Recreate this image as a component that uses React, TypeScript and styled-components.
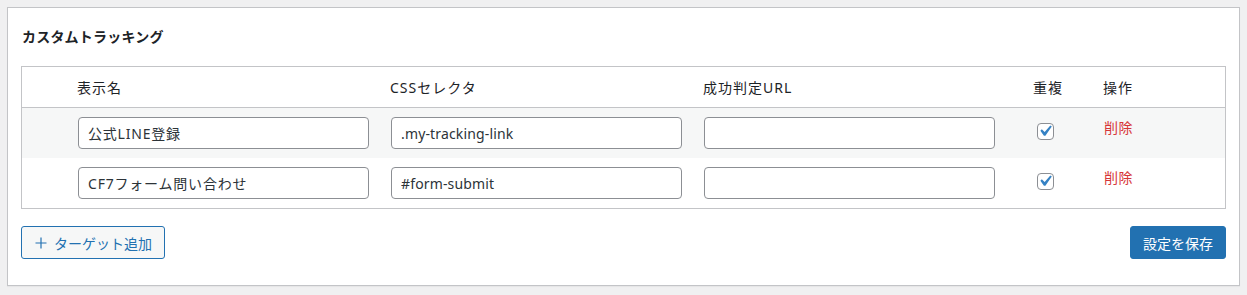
import React from 'react';
import styled, { createGlobalStyle } from 'styled-components';

const GlobalStyle = createGlobalStyle`
  html, body {
    margin: 0;
    padding: 0;
    background: #f0f0f1;
  }
  body {
    font-family: "Noto Sans", "Noto Sans CJK JP", sans-serif;
    color: #1d2327;
  }
  #root {
    padding: 7px;
  }
`;

const Card = styled.div`
  background: #fff;
  border: 1px solid #c3c4c7;
  padding: 19px 13px 26px;
  box-shadow: 0 1px 1px rgba(0, 0, 0, 0.04);
`;

const Title = styled.h2`
  margin: 0 0 19px;
  padding-left: 1px;
  font-size: 14px;
  line-height: 20px;
  font-weight: 700;
  letter-spacing: 0.2px;
  color: #1d2327;
`;

const Table = styled.div`
  border: 1px solid #c3c4c7;
`;

const COLUMNS = '46px 313px 313px 330px 70px 1fr';

const HeadRow = styled.div`
  display: grid;
  grid-template-columns: ${COLUMNS};
  height: 40px;
  align-items: center;
  border-bottom: 1px solid #c3c4c7;
`;

const HeadCell = styled.div`
  padding: 0 10px 0 9px;
  font-size: 14px;
  letter-spacing: 1px;
  color: #1d2327;
`;

const Row = styled.div<{ $alt?: boolean }>`
  display: grid;
  grid-template-columns: ${COLUMNS};
  height: 50px;
  align-items: center;
  background: ${(p) => (p.$alt ? '#f6f7f7' : '#fff')};
`;

const Cell = styled.div<{ $pad?: number }>`
  padding: 0 10px 0 ${(p) => p.$pad ?? 10}px;
  display: flex;
  align-items: center;
`;

const TextInput = styled.input<{ $jp?: boolean }>`
  box-sizing: border-box;
  width: 291px;
  height: 32px;
  padding: 0 10px 0 9px;
  border: 1px solid #8c8f94;
  border-radius: 4px;
  background: #fff;
  font-family: "Noto Sans", "Noto Sans CJK JP", sans-serif;
  font-size: 14px;
  letter-spacing: ${(p) => (p.$jp ? '0.8px' : '0.15px')};
  color: #2c3338;
  outline: none;
`;

const CheckBox = styled.span`
  box-sizing: border-box;
  width: 17px;
  height: 17px;
  border: 1px solid #8c8f94;
  border-radius: 4px;
  background: #fff;
  display: inline-flex;
  align-items: center;
  justify-content: center;
  margin-top: -4px;
  svg {
    flex: none;
    width: 22px;
    height: 22px;
    margin: -1px 0 0 -1px;
  }
`;

const DeleteLink = styled.a`
  color: #d63638;
  font-size: 14px;
  letter-spacing: 0.5px;
  text-decoration: none;
  cursor: pointer;
  margin-top: -12px;
`;

const Footer = styled.div`
  display: flex;
  justify-content: space-between;
  align-items: center;
  margin-top: 17px;
`;

const Button = styled.button<{ $primary?: boolean }>`
  box-sizing: border-box;
  height: 33px;
  padding: 0 12px;
  display: inline-flex;
  align-items: center;
  gap: 7px;
  border-radius: 3px;
  border: 1px solid #2271b1;
  background: ${(p) => (p.$primary ? '#2271b1' : '#f6f7f7')};
  color: ${(p) => (p.$primary ? '#fff' : '#2271b1')};
  font-family: "Noto Sans", "Noto Sans CJK JP", sans-serif;
  font-size: 14px;
  cursor: pointer;
`;

const PlusIcon = styled.svg`
  width: 12px;
  height: 12px;
  margin-left: 1px;
`;

const Check = () => (
  <CheckBox>
    <svg viewBox="0 0 20 20">
      <path fill="#3582c4" d="M14.83 4.89l1.34.94-5.81 8.38H9.02L5.78 9.67l1.34-1.25 2.57 2.4z" />
    </svg>
  </CheckBox>
);

const targets = [
  { name: '公式LINE登録', selector: '.my-tracking-link', url: '' },
  { name: 'CF7フォーム問い合わせ', selector: '#form-submit', url: '' },
];

export default function App() {
  return (
    <>
      <GlobalStyle />
      <Card>
        <Title>カスタムトラッキング</Title>
        <Table>
          <HeadRow>
            <HeadCell />
            <HeadCell>表示名</HeadCell>
            <HeadCell>CSSセレクタ</HeadCell>
            <HeadCell>成功判定URL</HeadCell>
            <HeadCell>重複</HeadCell>
            <HeadCell>操作</HeadCell>
          </HeadRow>
          {targets.map((t, i) => (
            <Row key={i} $alt={i % 2 === 0}>
              <Cell />
              <Cell>
                <TextInput $jp defaultValue={t.name} />
              </Cell>
              <Cell>
                <TextInput defaultValue={t.selector} />
              </Cell>
              <Cell>
                <TextInput defaultValue={t.url} />
              </Cell>
              <Cell $pad={13}>
                <Check />
              </Cell>
              <Cell>
                <DeleteLink>削除</DeleteLink>
              </Cell>
            </Row>
          ))}
        </Table>
        <Footer>
          <Button>
            <PlusIcon viewBox="0 0 12 12">
              <path d="M6 0.5v11M0.5 6h11" stroke="#2271b1" strokeWidth="1.2" fill="none" />
            </PlusIcon>
            ターゲット追加
          </Button>
          <Button $primary>設定を保存</Button>
        </Footer>
      </Card>
    </>
  );
}
